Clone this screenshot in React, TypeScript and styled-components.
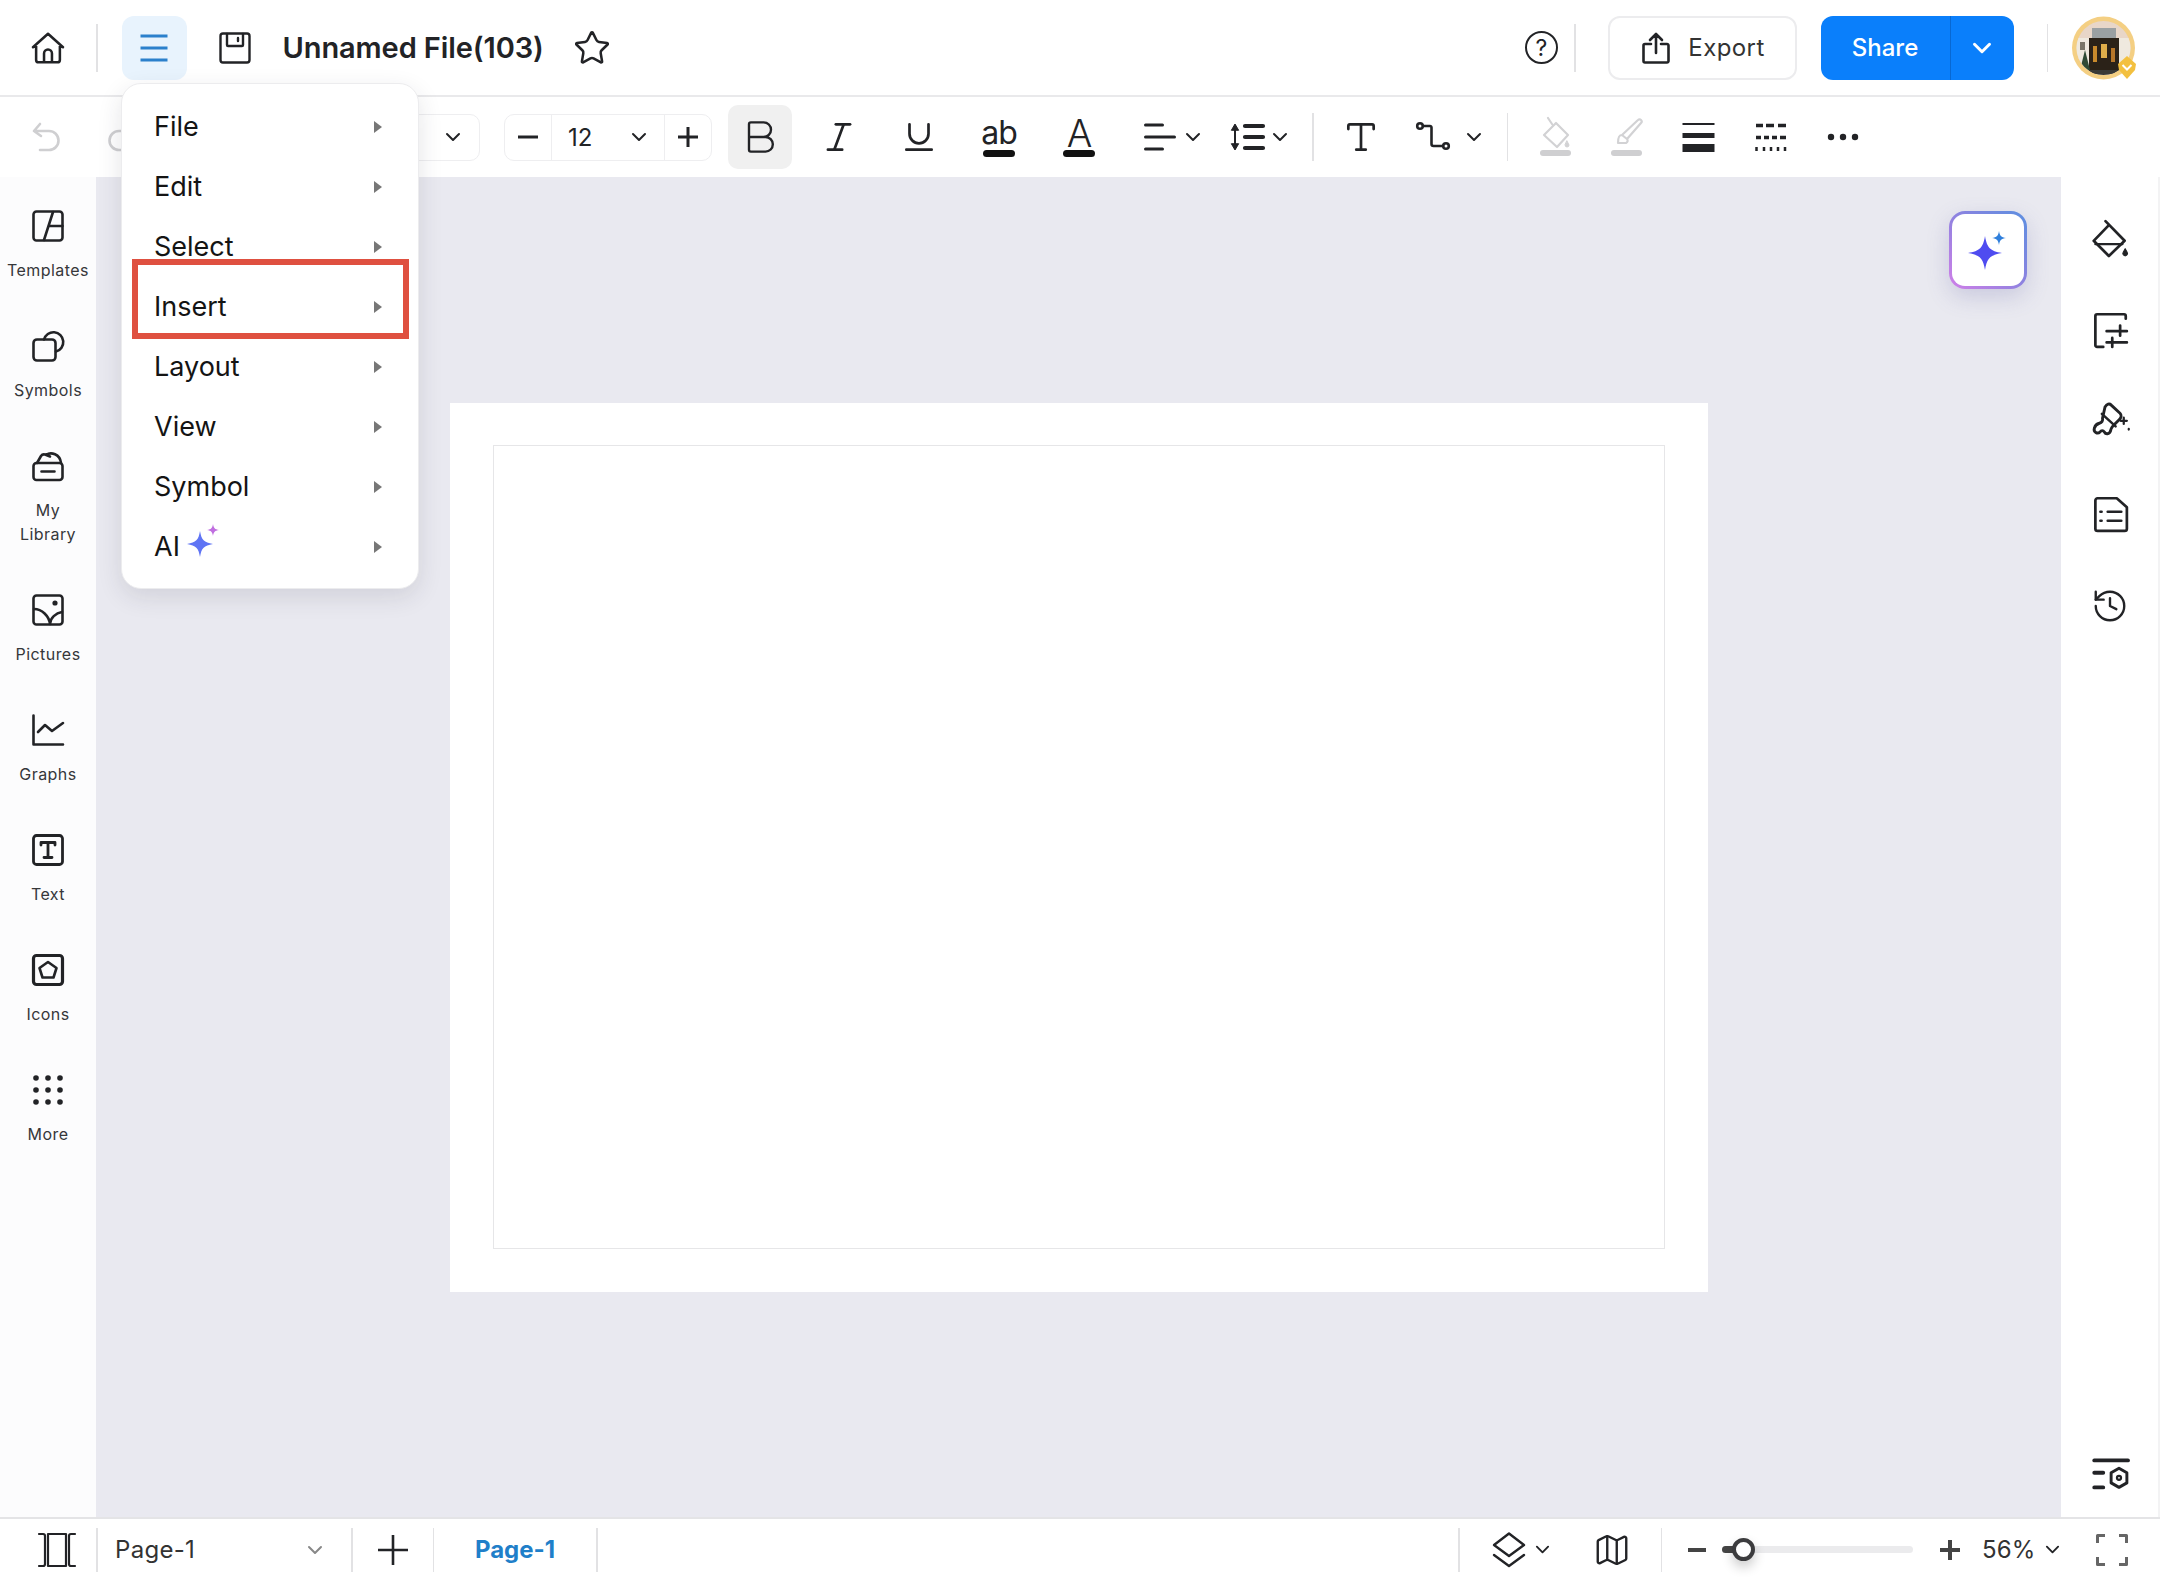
import React from "react";
import styled, { createGlobalStyle } from "styled-components";
import { Bold, Italic, Underline, Type, Star, History, Map as MapIcon, ChevronDown } from "lucide-react";

const GlobalStyle = createGlobalStyle`
  html, body { margin: 0; padding: 0; background: #fff; }
  * { box-sizing: border-box; }
`;

const INK = "#222326";

const Root = styled.div`
  position: relative;
  width: 2160px;
  height: 1580px;
  overflow: hidden;
  display: grid;
  grid-template-rows: 97px 80px 1fr 63px;
  font-family: Inter, "Liberation Sans", sans-serif;
  color: ${INK};
`;

const Bar = styled.div<{ $line?: boolean }>`
  display: flex;
  align-items: center;
  background: #fff;
  border-bottom: ${({ $line }) => ($line ? "2px solid #e9e9eb" : "none")};
`;

const BottomBar = styled(Bar)`
  border-top: 2px solid #e4e4e6;
`;

const Slot = styled.div<{ $w: number; $gap?: number }>`
  width: ${({ $w }) => $w}px;
  flex: none;
  display: flex;
  align-items: center;
  justify-content: center;
  gap: ${({ $gap }) => $gap ?? 0}px;
`;

const Rule = styled.div<{ $h: number }>`
  width: 1.5px;
  height: ${({ $h }) => $h}px;
  flex: none;
  background: #e2e2e4;
`;

const Glyph = styled.svg<{ $c?: string }>`
  display: block;
  flex: none;
  fill: none;
  overflow: visible;
  stroke: ${({ $c }) => $c ?? INK};
  stroke-linecap: round;
  stroke-linejoin: round;
`;

const MenuButton = styled.div`
  width: 65px;
  height: 64px;
  margin-left: 24px;
  flex: none;
  border-radius: 12px;
  background: #e8f3fd;
  display: flex;
  align-items: center;
  justify-content: center;
`;

const Title = styled.div`
  width: 279px;
  flex: none;
  font-size: 29px;
  font-weight: 600;
  white-space: nowrap;
  letter-spacing: -0.1px;
`;

const Help = styled.div`
  width: 33px;
  height: 33px;
  border: 2.5px solid ${INK};
  border-radius: 50%;
  display: flex;
  align-items: center;
  justify-content: center;
  font-size: 23px;
  font-weight: 400;
`;

const ExportButton = styled.div`
  width: 189px;
  height: 64px;
  margin-left: 32px;
  flex: none;
  border: 2px solid #ececee;
  border-radius: 12px;
  display: flex;
  align-items: center;
  justify-content: center;
  gap: 18px;
  padding-left: 3px;
  font-size: 24px;
  letter-spacing: 0.4px;
  color: #333;
`;

const ShareButton = styled.div`
  width: 193px;
  height: 64px;
  margin-left: 24px;
  flex: none;
  border-radius: 12px;
  background: #0a7ffb;
  color: #fff;
  display: flex;
  font-size: 24px;
  font-weight: 500;
`;

const ShareLabel = styled.div`
  width: 130px;
  display: flex;
  align-items: center;
  justify-content: center;
  border-right: 1.5px solid #0868d2;
`;

const ShareArrow = styled.div`
  flex: 1;
  display: flex;
  align-items: center;
  justify-content: center;
`;

const RedoBox = styled.div`
  width: 22px;
  padding-left: 11px;
  flex: none;
  display: flex;
`;

const FontBox = styled.div`
  width: 345px;
  height: 47px;
  margin-left: 19px;
  flex: none;
  border: 1.5px solid #eeeef0;
  border-radius: 10px;
  display: flex;
  align-items: center;
  justify-content: flex-end;
  padding-right: 18px;
`;

const SizeGroup = styled.div`
  width: 208px;
  height: 47px;
  margin-left: 24px;
  flex: none;
  border: 1.5px solid #eeeef0;
  border-radius: 10px;
  display: flex;
  align-items: center;
`;

const SizeCell = styled.div<{ $w?: number; $split?: boolean }>`
  width: ${({ $w }) => ($w ? `${$w}px` : "auto")};
  flex: ${({ $w }) => ($w ? "none" : 1)};
  height: 100%;
  display: flex;
  align-items: center;
  justify-content: space-between;
  padding: ${({ $split }) => ($split ? "0 17px 0 16px" : "0")};
  border-left: ${({ $split }) => ($split ? "1.5px solid #eeeef0" : "none")};
  border-right: ${({ $split }) => ($split ? "1.5px solid #eeeef0" : "none")};
  font-size: 24px;
`;

const CenterCell = styled(SizeCell)`
  justify-content: center;
  padding: 0;
`;

const BoldButton = styled.div`
  width: 64px;
  height: 64px;
  margin: 0 7px 0 16px;
  flex: none;
  border-radius: 10px;
  background: #f0f0f0;
  display: flex;
  align-items: center;
  justify-content: center;
`;

const LetterStack = styled.div`
  display: flex;
  flex-direction: column;
  align-items: center;
`;

const Letter = styled.span<{ $size: number; $weight?: number }>`
  font-size: ${({ $size }) => $size}px;
  font-weight: ${({ $weight }) => $weight ?? 400};
  line-height: 30px;
  height: 30px;
  letter-spacing: -1px;
`;

const ColorBar = styled.div`
  width: 32px;
  height: 7px;
  margin-top: 2px;
  border-radius: 4px;
  background: #111;
`;

const Middle = styled.div`
  display: flex;
  min-height: 0;
`;

const LeftRail = styled.div`
  width: 96px;
  flex: none;
  padding-top: 33px;
  display: flex;
  flex-direction: column;
  align-items: center;
  gap: 48px;
  background: #fcfcfd;
`;

const RailItem = styled.div`
  width: 96px;
  display: flex;
  flex-direction: column;
  align-items: center;
  gap: 16px;
`;

const RailLabel = styled.div`
  width: 96px;
  font-size: 16px;
  line-height: 24px;
  letter-spacing: 0.45px;
  text-align: center;
  color: #36373a;
  white-space: pre-line;
`;

const Canvas = styled.div`
  position: relative;
  flex: 1;
  background: #e9e9f0;
  display: flex;
  align-items: center;
  justify-content: center;
`;

const Page = styled.div`
  width: 1258px;
  height: 889px;
  padding: 42px 43px 43px;
  background: #fff;
  display: flex;
`;

const PageInner = styled.div`
  flex: 1;
  border: 1.5px solid #e6e6e8;
`;

const AiButton = styled.div`
  position: absolute;
  top: 34px;
  right: 34px;
  width: 78px;
  height: 78px;
  padding: 3px;
  border-radius: 16px;
  background: linear-gradient(45deg, #d07fe8, #8f82e0 50%, #5b8fe0);
  box-shadow: 0 8px 22px rgba(90, 90, 160, 0.22);
`;

const AiInner = styled.div`
  width: 100%;
  height: 100%;
  border-radius: 13px;
  background: #fff;
  display: flex;
  align-items: center;
  justify-content: center;
`;

const RightRail = styled.div`
  width: 99px;
  flex: none;
  padding: 43px 0 24px;
  display: flex;
  flex-direction: column;
  align-items: center;
  gap: 56px;
  background: #fff;
  border-right: 2px solid #f3f3f4;
`;

const RailCell = styled.div`
  height: 36px;
  flex: none;
  display: flex;
  align-items: center;
  justify-content: center;
`;

const RailFoot = styled.div`
  margin-top: auto;
`;

const Menu = styled.div`
  position: absolute;
  left: 121px;
  top: 83px;
  width: 298px;
  height: 506px;
  padding: 12px 0 12px;
  background: #fff;
  border: 1.5px solid #ececee;
  border-radius: 20px;
  box-shadow: 0 8px 24px rgba(40, 40, 60, 0.12);
  z-index: 5;
`;

const MenuRow = styled.div`
  height: 60px;
  padding: 0 36px 0 32px;
  display: flex;
  align-items: center;
  justify-content: space-between;
  font-size: 27px;
  color: #141414;
`;

const MenuLabel = styled.span`
  display: flex;
  align-items: center;
  gap: 6px;
`;

const MenuCaret = styled.span`
  width: 0;
  height: 0;
  margin-top: 2px;
  border-left: 8px solid #777;
  border-top: 6px solid transparent;
  border-bottom: 6px solid transparent;
`;

const Highlight = styled.div`
  position: absolute;
  left: 10px;
  top: 175px;
  width: 277px;
  height: 80px;
  border: 6px solid #df5040;
`;

const PageName = styled.div`
  width: 253.5px;
  padding: 0 24px 0 17.5px;
  flex: none;
  display: flex;
  align-items: center;
  justify-content: space-between;
  font-size: 24px;
  letter-spacing: 0.3px;
  color: #333;
`;

const PageTab = styled.div`
  width: 162px;
  flex: none;
  text-align: center;
  font-size: 24px;
  font-weight: 700;
  color: #1f7fc9;
`;

const Spacer = styled.div`
  flex: 1;
`;

const Slider = styled.div`
  position: relative;
  width: 191px;
  height: 7px;
  flex: none;
  margin: 0 27px 0 15px;
  border-radius: 4px;
  background: #ebebed;
`;

const SliderFill = styled.div`
  position: absolute;
  left: 0;
  top: 0;
  width: 16px;
  height: 7px;
  border-radius: 4px 0 0 4px;
  background: #444;
`;

const SliderKnob = styled.div`
  position: absolute;
  left: 10px;
  top: -8px;
  width: 23px;
  height: 23px;
  border: 4px solid #3c3c3e;
  border-radius: 50%;
  background: #fff;
  box-shadow: 0 6px 12px rgba(0, 0, 0, 0.2);
`;

const Zoom = styled.div`
  width: 52px;
  margin-right: 11px;
  flex: none;
  font-size: 24px;
  letter-spacing: 0.1px;
  color: #333;
`;

const Sparkle = ({ x, y, r, fill }: { x: number; y: number; r: number; fill: string }) => (
  <path
    fill={fill}
    stroke="none"
    d={`M${x} ${y - r}C${x + r * 0.12} ${y - r * 0.3} ${x + r * 0.3} ${y - r * 0.12} ${x + r} ${y}C${x + r * 0.3} ${y + r * 0.12} ${x + r * 0.12} ${y + r * 0.3} ${x} ${y + r}C${x - r * 0.12} ${y + r * 0.3} ${x - r * 0.3} ${y + r * 0.12} ${x - r} ${y}C${x - r * 0.3} ${y - r * 0.12} ${x - r * 0.12} ${y - r * 0.3} ${x} ${y - r}Z`}
  />
);

const Chevron = ({ size = 16, color = INK, w = 2 }: { size?: number; color?: string; w?: number }) => (
  <Glyph $c={color} width={size} height={size} viewBox="0 0 16 16" strokeWidth={w}>
    <path d="M2 5l6 6 6-6" />
  </Glyph>
);

const icon32 = (body: React.ReactNode, w = 2.6, size = 32, c?: string) => (
  <Glyph $c={c} width={size} height={size} viewBox="0 0 32 32" strokeWidth={w}>
    {body}
  </Glyph>
);

const railItems: { label: string; icon: React.ReactNode }[] = [
  {
    label: "Templates",
    icon: icon32(
      <>
        <rect x="1.5" y="1.5" width="29" height="29" rx="3" />
        <path d="M21 2l-9 28M16.5 16h14" />
      </>
    ),
  },
  {
    label: "Symbols",
    icon: icon32(
      <>
        <rect x="1.5" y="9.5" width="22" height="21" rx="3.5" />
        <path d="M12 9.5a9.8 9.8 0 1 1 12 12" />
      </>
    ),
  },
  {
    label: "My\nLibrary",
    icon: icon32(
      <>
        <rect x="1.5" y="13" width="29" height="17" rx="3" />
        <path d="M9.5 21.5h13M5 13l4-7c1-1.500 2-2 4-1.500l5 2M14 5c5-3.500 14-1 15 8" />
      </>
    ),
  },
  {
    label: "Pictures",
    icon: icon32(
      <>
        <rect x="1.500" y="1.500" width="29" height="29" rx="3" />
        <path d="M2 15c8 0 15 7 16 15M18 30c0-6 6-11 12-12" />
        <circle cx="23" cy="9" r="1.300" fill={INK} />
      </>
    ),
  },
  {
    label: "Graphs",
    icon: icon32(<path d="M1.500 1.500V30.500H31M6 18l7-7 7 6 11-8" />),
  },
  {
    label: "Text",
    icon: icon32(
      <>
        <rect x="1.500" y="1.500" width="29" height="29" rx="3" strokeWidth="2.800" />
        <path d="M9 11V8.500H23V11M16 8.500V23M12 23.500H20" strokeWidth="2.800" />
      </>
    ),
  },
  {
    label: "Icons",
    icon: icon32(
      <>
        <rect x="1.500" y="1.500" width="29" height="29" rx="3" strokeWidth="3.200" />
        <path d="M16 8l8.500 6-3 9.500h-11l-3-9.500z" />
      </>
    ),
  },
  {
    label: "More",
    icon: (
      <Glyph width={32} height={32} viewBox="0 0 32 32">
        {[4, 16, 28].flatMap((y) =>
          [4, 16, 28].map((x) => <circle key={`${x}-${y}`} cx={x} cy={y} r="2.800" fill={INK} stroke="none" />)
        )}
      </Glyph>
    ),
  },
];

const menuItems = ["File", "Edit", "Select", "Insert", "Layout", "View", "Symbol", "AI"];

function Avatar() {
  return (
    <svg width="68" height="64" viewBox="0 0 68 64">
      <clipPath id="avatar-photo">
        <circle cx="31.500" cy="32" r="27" />
      </clipPath>
      <circle cx="31.500" cy="32" r="31.500" fill="#f4cf83" />
      <g clipPath="url(#avatar-photo)">
        <rect width="64" height="64" fill="#e8d6c8" />
        <rect x="4" y="22" width="56" height="40" fill="#efe9df" />
        <rect x="20" y="12" width="24" height="10" fill="#9aa0a2" />
        <rect x="17" y="22" width="30" height="36" fill="#2b2218" />
        <rect x="21" y="30" width="4" height="16" fill="#c98a2c" />
        <rect x="29" y="28" width="6" height="14" fill="#e0ae4a" />
        <rect x="39" y="32" width="4" height="14" fill="#b7772a" />
        <path d="M8 54L13 34l5 20z" fill="#2f4a35" />
        <rect x="8" y="26" width="5" height="8" fill="#7a7468" />
        <rect x="4" y="54" width="56" height="8" fill="#3a3a36" />
      </g>
      <path d="M55 40l9 8-1 6-8 9-8-9-1-6z" fill="#f3c03f" />
      <path d="M50.500 49l4.500 4.500 4.500-4.500" fill="none" stroke="#fff" strokeWidth="2" />
    </svg>
  );
}

export default function App() {
  return (
    <Root>
      <GlobalStyle />

      <Bar $line>
        <Slot $w={96}>
          <Glyph width={38} height={38} viewBox="0 0 24 24" strokeWidth={1.6}>
            <path d="M2.500 11.500L12 3l9.500 8.500M4.500 10v9.500a1.500 1.500 0 0 0 1.500 1.500h12a1.500 1.500 0 0 0 1.500-1.500V10M9.500 21v-5.500a2.500 2.500 0 0 1 5 0V21" />
          </Glyph>
        </Slot>
        <Rule $h={48} />
        <MenuButton>
          <Glyph $c="#2b80cc" width={30} height={28} viewBox="0 0 30 28" strokeWidth={3}>
            <path d="M1.500 2h27M1.500 14h27M1.500 26h27" strokeLinecap="butt" />
          </Glyph>
        </MenuButton>
        <Slot $w={96}>
          <Glyph width={32} height={32} viewBox="0 0 32 32" strokeWidth={2.400}>
            <rect x="1.500" y="1.500" width="29" height="29" rx="2.500" />
            <path d="M8 2v11a1 1 0 0 0 1 1h14a1 1 0 0 0 1-1V2M19 6v3" />
          </Glyph>
        </Slot>
        <Title>Unnamed File(103)</Title>
        <Slot $w={61}>
          <Star size={38} strokeWidth={1.600} color={INK} />
        </Slot>
        <Spacer />
        <Help>?</Help>
        <Slot $w={16} />
        <Rule $h={48} />
        <ExportButton>
          <Glyph width={28} height={32} viewBox="0 0 28 32" strokeWidth={2.600}>
            <path d="M9 12H3a1.500 1.500 0 0 0-1.500 1.500V29A1.500 1.500 0 0 0 3 30.500h22a1.500 1.500 0 0 0 1.500-1.500V13.500A1.500 1.500 0 0 0 25 12h-6M14 21V2M8 8l6-6 6 6" />
          </Glyph>
          Export
        </ExportButton>
        <ShareButton>
          <ShareLabel>Share</ShareLabel>
          <ShareArrow>
            <Chevron size={20} color="#fff" w={2.400} />
          </ShareArrow>
        </ShareButton>
        <Slot $w={33} />
        <Rule $h={48} />
        <Slot $w={24} />
        <Avatar />
        <Slot $w={20} />
      </Bar>

      <Bar>
        <Slot $w={94}>
          <Glyph $c="#cfcfd1" width={32} height={32} viewBox="0 0 32 32" strokeWidth={2.600}>
            <path d="M9 3L3 10l7 5M3 10h15a9.500 9.500 0 0 1 0 19H9" />
          </Glyph>
        </Slot>
        <RedoBox>
          <Glyph $c="#cfcfd1" width={32} height={32} viewBox="0 0 32 32" strokeWidth={2.600}>
            <path d="M23 3l6 7-7 5M29 10H14a9.500 9.500 0 0 0 0 19h9" />
          </Glyph>
        </RedoBox>
        <FontBox>
          <Chevron />
        </FontBox>
        <SizeGroup>
          <CenterCell $w={46}>
            <Glyph width={24} height={24} viewBox="0 0 24 24" strokeWidth={3}>
              <path d="M2 12h20" strokeLinecap="butt" />
            </Glyph>
          </CenterCell>
          <SizeCell $split>
            12
            <Chevron />
          </SizeCell>
          <CenterCell $w={46}>
            <Glyph width={24} height={24} viewBox="0 0 24 24" strokeWidth={3}>
              <path d="M2 12h20M12 2v20" strokeLinecap="butt" />
            </Glyph>
          </CenterCell>
        </SizeGroup>
        <BoldButton>
          <Bold size={44} strokeWidth={1.300} color={INK} />
        </BoldButton>
        <Slot $w={80}>
          <Italic size={38} strokeWidth={1.700} color={INK} />
        </Slot>
        <Slot $w={80}>
          <Underline size={38} strokeWidth={1.700} color={INK} />
        </Slot>
        <Slot $w={80}>
          <LetterStack>
            <Letter $size={32}>ab</Letter>
            <ColorBar />
          </LetterStack>
        </Slot>
        <Slot $w={80}>
          <LetterStack>
            <Letter $size={38} $weight={300}>
              A
            </Letter>
            <ColorBar />
          </LetterStack>
        </Slot>
        <Slot $w={107} $gap={9}>
          <Glyph width={32} height={28} viewBox="0 0 32 28" strokeWidth={3}>
            <path d="M1.500 2h17M1.500 14h29M1.500 26h17" />
          </Glyph>
          <Chevron />
        </Slot>
        <Slot $w={65} $gap={6}>
          <Glyph width={36} height={30} viewBox="0 0 36 30" strokeWidth={4.200}>
            <path d="M15 4h18M15 15h18M15 26h18" />
            <path d="M5 4v22" strokeWidth="2" />
            <path d="M1.500 8L5 2l3.500 6zM1.500 22L5 28l3.500-6z" fill={INK} strokeWidth="1" />
          </Glyph>
          <Chevron />
        </Slot>
        <Slot $w={21} />
        <Rule $h={48} />
        <Slot $w={94}>
          <Type size={38} strokeWidth={1.700} color={INK} />
        </Slot>
        <Slot $w={83} $gap={14}>
          <Glyph width={36} height={30} viewBox="0 0 36 30" strokeWidth={2.600}>
            <circle cx="4" cy="4" r="2.800" />
            <circle cx="30" cy="24" r="2.800" />
            <path d="M7 4h7a1.500 1.500 0 0 1 1.500 1.500V22a2 2 0 0 0 2 2H27" />
          </Glyph>
          <Chevron />
        </Slot>
        <Slot $w={16} />
        <Rule $h={48} />
        <Slot $w={95}>
          <Glyph width={34} height={40} viewBox="0 0 34 40" strokeWidth={2.200} $c="#d2d2d4">
            <path d="M9 1l4 6M17 6l12 12-11 12L5 18z" />
            <path d="M28 24l2 4a2 2 0 1 1-4 0z" fill="#d2d2d4" strokeWidth="1" />
            <rect x="1" y="33" width="31" height="6" rx="3" fill="#cfcfd1" stroke="none" />
          </Glyph>
        </Slot>
        <Slot $w={48}>
          <Glyph width={34} height={40} viewBox="0 0 34 40" strokeWidth={2.200} $c="#d2d2d4">
            <path d="M28 3c2-2 5 1 3 3L17 22l-5-4zM12 18c-3 0-4 2-4 8h8c2-1 2-3 1-4" />
            <rect x="1" y="33" width="31" height="6" rx="3" fill="#cfcfd1" stroke="none" />
          </Glyph>
        </Slot>
        <Slot $w={94}>
          <Glyph width={33} height={30} viewBox="0 0 33 30" strokeWidth={0}>
            <rect x="0.500" y="1" width="32" height="2" fill={INK} />
            <rect x="0.500" y="11" width="32" height="5" fill={INK} />
            <rect x="0.500" y="22" width="32" height="8" fill={INK} />
          </Glyph>
        </Slot>
        <Slot $w={51}>
          <Glyph width={32} height={30} viewBox="0 0 32 30" strokeWidth={3.500}>
            <path d="M1 3.500h7M11 3.500h8M23 3.500h8" strokeLinecap="butt" />
            <path d="M1 15.500h5M9 15.500h5M17 15.500h5M25 15.500h6" strokeLinecap="butt" />
            <path d="M1.500 25v4M9 25v4M16 25v4M23 25v4M30 25v4" strokeLinecap="butt" strokeWidth="2.500" />
          </Glyph>
        </Slot>
        <Slot $w={94}>
          <Glyph width={32} height={8} viewBox="0 0 32 8">
            <circle cx="4" cy="4" r="3.200" fill={INK} stroke="none" />
            <circle cx="16" cy="4" r="3.200" fill={INK} stroke="none" />
            <circle cx="28" cy="4" r="3.200" fill={INK} stroke="none" />
          </Glyph>
        </Slot>
      </Bar>

      <Middle>
        <LeftRail>
          {railItems.map((item) => (
            <RailItem key={item.label}>
              {item.icon}
              <RailLabel>{item.label}</RailLabel>
            </RailItem>
          ))}
        </LeftRail>
        <Canvas>
          <Page>
            <PageInner />
          </Page>
          <AiButton>
            <AiInner>
              <svg width="44" height="44" viewBox="0 0 44 44">
                <Sparkle x={19} y={25} r={17} fill="#4f4cf0" />
                <Sparkle x={33} y={10} r={7} fill="#2f7fdc" />
              </svg>
            </AiInner>
          </AiButton>
        </Canvas>
        <RightRail>
          <RailCell>
            {icon32(
              <>
                <path d="M12 1l17 17.500L15 32 1.500 18.500 15 4.500" />
                <path d="M3 21.500h24" strokeWidth="2" />
                <path d="M29.500 25.500l1.700 3.200a2 2 0 1 1-3.400 0z" fill={INK} strokeWidth="1" />
              </>,
              2.400,
              36
            )}
          </RailCell>
          <RailCell>
            {icon32(
              <>
                <path d="M30 6V3.500a1.500 1.500 0 0 0-1.500-1.500H4.500A1.500 1.500 0 0 0 3 3.500v26A1.500 1.500 0 0 0 4.500 31H10" />
                <path d="M13 17h18M25 12v9M13 27h18M18 23v8" />
              </>,
              2.400,
              36
            )}
          </RailCell>
          <RailCell>
            {icon32(
              <>
                <path d="M12 4c1.500-2.500 3.500-3 5-1.500l7 6.500c1.500 1.500 1 3.500-.5 5l-4 4c-1.500 1.500-3 3-3 5-1 3-4 3-5 1-1-1.500-2.500-1.500-3.500 0-2 2-5.500 0-4.500-3 .5-2 2-3.500 4-4 2-.5 3-2 2.500-4z" />
                <path d="M9.500 9.500l11 10" strokeWidth="2" />
                <path d="M27 12.500v5M24.500 15h5M31 21.500v.5" strokeWidth="1.800" />
              </>,
              2.300,
              40
            )}
          </RailCell>
          <RailCell>
            {icon32(
              <>
                <path d="M22 2H5a2 2 0 0 0-2 2v25a2 2 0 0 0 2 2h24a2 2 0 0 0 2-2V10z" />
                <path d="M14 14h12M14 22h12M7.500 14h1M7.500 22h1" />
              </>,
              2.400,
              36
            )}
          </RailCell>
          <RailCell>
            <History size={38} strokeWidth={1.500} color={INK} />
          </RailCell>
          <RailFoot>
            {icon32(
              <>
                <path d="M2 3h30" strokeWidth="3.400" />
                <path d="M2 14h8M2 27h8" strokeWidth="3.400" />
                <path d="M24 10l7 4v9l-7 4-7-4v-9z" strokeWidth="2.600" />
                <circle cx="24" cy="18.500" r="1.800" strokeWidth="2" />
              </>,
              2.600,
              36
            )}
          </RailFoot>
        </RightRail>
      </Middle>

      <BottomBar>
        <Slot $w={38} />
        <Glyph width={38} height={36} viewBox="0 0 38 36" strokeWidth={2.200}>
          <rect x="10" y="2" width="18" height="32" />
          <path d="M1 2h4a2 2 0 0 1 2 2v28a2 2 0 0 1-2 2H1M37 2h-4a2 2 0 0 0-2 2v28a2 2 0 0 0 2 2h4" />
        </Glyph>
        <Slot $w={20} />
        <Rule $h={44} />
        <PageName>
          Page-1
          <ChevronDown size={24} strokeWidth={2} color="#888" />
        </PageName>
        <Rule $h={44} />
        <Slot $w={80}>
          <Glyph width={32} height={32} viewBox="0 0 32 32" strokeWidth={2.600}>
            <path d="M1 16h30M16 1v30" strokeLinecap="butt" />
          </Glyph>
        </Slot>
        <Rule $h={44} />
        <PageTab>Page-1</PageTab>
        <Rule $h={44} />
        <Spacer />
        <Rule $h={44} />
        <Slot $w={122} $gap={9}>
          <Glyph width={34} height={36} viewBox="0 0 34 36" strokeWidth={2.400}>
            <path d="M17 1.500L32 13 17 24 2 13zM2 23l15 11 15-11" />
          </Glyph>
          <Chevron size={15} />
        </Slot>
        <Slot $w={60}>
          <MapIcon size={38} strokeWidth={1.500} color={INK} />
        </Slot>
        <Slot $w={19} />
        <Rule $h={44} />
        <Slot $w={25} />
        <Glyph $c="#444" width={20} height={6} viewBox="0 0 20 6" strokeWidth={4}>
          <path d="M1 3h18" strokeLinecap="butt" />
        </Glyph>
        <Slider>
          <SliderFill />
          <SliderKnob />
        </Slider>
        <Glyph $c="#444" width={20} height={20} viewBox="0 0 20 20" strokeWidth={4}>
          <path d="M0 10h20M10 0v20" strokeLinecap="butt" />
        </Glyph>
        <Slot $w={22} />
        <Zoom>56%</Zoom>
        <Chevron size={15} />
        <Slot $w={36} />
        <Glyph $c="#666" width={32} height={32} viewBox="0 0 32 32" strokeWidth={3}>
          <path d="M1.500 9V1.500H9M23 1.500h7.500V9M30.500 23v7.500H23M9 30.500H1.500V23" strokeLinecap="butt" />
        </Glyph>
        <Slot $w={32} />
      </BottomBar>

      <Menu>
        {menuItems.map((name) => (
          <MenuRow key={name}>
            <MenuLabel>
              {name}
              {name === "AI" && (
                <Glyph width={34} height={36} viewBox="0 0 34 36">
                  <Sparkle x={14} y={16} r={13} fill="#5f74f4" />
                  <Sparkle x={27} y={2} r={6} fill="#c06fe0" />
                </Glyph>
              )}
            </MenuLabel>
            <MenuCaret />
          </MenuRow>
        ))}
        <Highlight />
      </Menu>
    </Root>
  );
}
